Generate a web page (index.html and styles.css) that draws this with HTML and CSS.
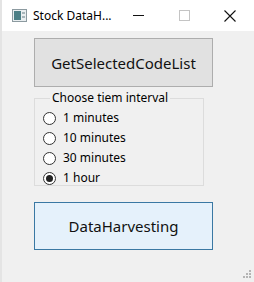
FILE: index.html
```html
<!DOCTYPE html>
<html>
<head>
<meta charset="utf-8">
<link rel="stylesheet" href="styles.css">
</head>
<body>
<div class="window">
  <div class="titlebar">
    <svg class="app-icon" width="15" height="13" viewBox="0 0 15 13">
      <rect x="0.5" y="0.5" width="14" height="12" fill="#e9eef0" stroke="#8c9aa0"/>
      <rect x="2" y="2" width="7" height="9" fill="#4c7f86"/>
      <rect x="10" y="3" width="3" height="2" fill="#a7b5ba"/>
      <rect x="10" y="7" width="3" height="2" fill="#a7b5ba"/>
    </svg>
    <span class="title">Stock DataH...</span>
    <div class="controls">
      <span class="ctl min"></span>
      <span class="ctl max"></span>
      <svg class="ctl close" width="12" height="12" viewBox="0 0 12 12">
        <path d="M0.5 0.5 L11.5 11.5 M11.5 0.5 L0.5 11.5" stroke="#111" stroke-width="1.1"/>
      </svg>
    </div>
  </div>
  <div class="content">
    <button class="btn btn-normal">GetSelectedCodeList</button>
    <fieldset class="group">
      <legend>Choose tiem interval</legend>
      <div class="radio"><span class="dot"></span><span>1 minutes</span></div>
      <div class="radio"><span class="dot"></span><span>10 minutes</span></div>
      <div class="radio"><span class="dot"></span><span>30 minutes</span></div>
      <div class="radio"><span class="dot checked"></span><span>1 hour</span></div>
    </fieldset>
    <button class="btn btn-focus">DataHarvesting</button>
    <div class="grip">
      <i></i><i></i><i></i><i></i><i></i><i></i>
    </div>
  </div>
</div>
</body>
</html>
```
FILE: styles.css
```css
html, body {
  margin: 0;
  padding: 0;
  background: #f0f0f0;
}
.window {
  width: 254px;
  height: 282px;
  display: flex;
  flex-direction: column;
  font-family: "Noto Sans", "Liberation Sans", Arial, sans-serif;
  color: #000;
  border-left: 2px solid #e4e4e4;
  box-sizing: border-box;
  position: relative;
}
.titlebar {
  height: 31px;
  background: #fff;
  display: flex;
  align-items: center;
  flex-shrink: 0;
}
.app-icon {
  margin-left: 10px;
}
.title {
  margin-left: 6px;
  font-size: 12px;
  line-height: 14px;
  color: #000;
}
.controls {
  margin-left: auto;
  display: flex;
  align-items: center;
  height: 31px;
}
.ctl {
  display: block;
}
.min {
  width: 11px;
  height: 1px;
  background: #111;
  margin-right: 35px;
}
.max {
  width: 9px;
  height: 9px;
  border: 1px solid #c4c4c4;
  margin-right: 34px;
}
.close {
  margin-right: 18px;
}
.content {
  flex: 1;
  background: #f0f0f0;
  padding-left: 32px;
  padding-top: 7px;
  position: relative;
}
.btn {
  display: block;
  width: 179px;
  height: 49px;
  margin: 0;
  padding: 0;
  font-family: "Noto Sans", "Liberation Sans", Arial, sans-serif;
  font-size: 15px;
  line-height: 18px;
  color: #111;
  box-sizing: border-box;
}
.btn-normal {
  background: #e1e1e1;
  border: 1px solid #adadad;
}
.btn-focus {
  background: #e5f1fb;
  border: 1px solid #3a78a3;
  margin-top: 16px;
  height: 48px;
}
.group {
  width: 170px;
  box-sizing: border-box;
  margin: 4px 0 0 0;
  padding: 6px 0 0 8px;
  border: 1px solid #dcdcdc;
  height: 95px;
  display: flex;
  flex-direction: column;
  gap: 6px;
}
.group legend {
  font-size: 12px;
  line-height: 14px;
  padding: 0 2px;
  margin-left: 7px;
}
.radio {
  display: flex;
  align-items: center;
  height: 14px;
  font-size: 12px;
  line-height: 14px;
}
.dot {
  width: 13px;
  height: 13px;
  box-sizing: border-box;
  border: 1px solid #333;
  border-radius: 50%;
  background: #fff;
  margin-right: 7px;
  display: flex;
  align-items: center;
  justify-content: center;
  flex-shrink: 0;
}
.dot.checked::after {
  content: "";
  width: 7px;
  height: 7px;
  border-radius: 50%;
  background: #222;
}
.grip {
  position: absolute;
  right: 3px;
  bottom: 4px;
  width: 8px;
  height: 8px;
}
.grip i {
  position: absolute;
  width: 2px;
  height: 2px;
  background: #b4b4b4;
}
.grip i:nth-child(1) { left: 6px; top: 0; }
.grip i:nth-child(2) { left: 3px; top: 3px; }
.grip i:nth-child(3) { left: 6px; top: 3px; }
.grip i:nth-child(4) { left: 0; top: 6px; }
.grip i:nth-child(5) { left: 3px; top: 6px; }
.grip i:nth-child(6) { left: 6px; top: 6px; }
```
